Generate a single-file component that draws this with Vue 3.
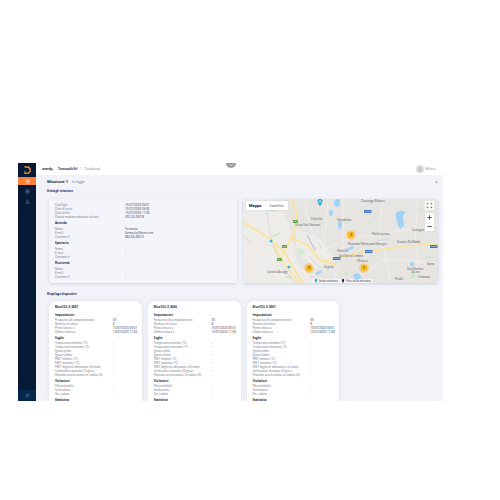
<script setup>
const mission = [
  { rows: [['Cod.Sigla', '15/07/2020 09:01'], ['Data di avvio', '15/07/2020 09:06'], ['Data di fine', '15/07/2020 11:06'], ['Durata massima missione rilevata', '007-22-00018']] },
  { title: 'Azienda', rows: [['Nome', 'Farmacia'], ['E-mail', 'farmacia@farm.com'], ['Contatto n°', '882-66-892 H']] },
  { title: 'Speciario', rows: [['Nome', '-'], ['E-mail', '-'], ['Contatto n°', '-']] },
  { title: 'Ricevente', rows: [['Nome', '-'], ['E-mail', '-'], ['Contatto n°', '-']] },
]
const device = [
  { title: 'Impostazioni', rows: [['Frequenza di campionamento', '30'], ['Numero di letture', '8'], ['Prima lettura a', '15/07/2020 09:01'], ['Ultima lettura a', '15/07/2020 11:00']] },
  { title: 'Soglie', rows: ['Temperatura minima [°C]', 'Temperatura massima [°C]', 'Ignora prime', 'Ignora ultime', 'MKT minima [°C]', 'MKT massima [°C]', 'MKT Soglia di attivazione [kJ/mole]', 'Inclinazione massima [Degree]', 'Massima accelerazione in caduta [G]'].map((l) => [l, '-']) },
  { title: 'Violazioni', rows: ['Microviolabile', 'Inclinazione', 'Sin. caduta'].map((l) => [l, '-']) },
  { title: 'Statistica', rows: [] },
]
const devices = ['BlueCOL 0_0001', 'BlueCOL 0_0066', 'BlueCOL 0_0061']
const places = [
  [68, 21, 'Cinisello'], [52, 27, 'Sesto San Giovanni'], [94, 22, 'Vimodrone'],
  [129, 35.5, 'Melzo/panzo'], [105, 45.5, 'Pozzuolo Martesana Novegro'], [154, 43.5, 'Cassina Dell’Adda'],
  [81, 68.5, 'Segrate'], [24, 73.5, 'Corsico/Assago'], [94, 52.5, 'Pioltello'], [96, 57.5, 'San Bovio Lambro'],
  [114, 62.5, 'Melzo/a'], [164, 71, 'San Martino'], [168, 74, 'Olearo'], [152, 80.5, 'Paullo'],
  [175, 78.5, 'Comazzo'], [169, 31.5, 'Castagna'], [184, 65.5, 'Spino'], [118, 2.5, 'Cavenago Brianza'],
]
const towns = [[8, 16], [32, 36], [65, 38], [97, 28], [75, 10], [130, 20], [178, 12], [128, 61], [169, 77], [34, 63], [48, 77], [100, 70], [180, 37], [120, 7]]
const shields = [[50, 21], [39, 46], [34, 59]]
const roads = [[121, 11], [90, 58], [122, 51], [187, 46]]
const clusters = [[66, 69, 8], [108, 36, 3], [121, 69, 5]]
</script>

<template>
  <div class="page">
    <div class="app">
      <nav class="side" aria-label="Menu">
        <svg class="logo" viewBox="0 0 18 14"><path d="M7 4H9.2A2.8 3 0 0 1 9.2 10.4H7V8.2" fill="none" stroke="#f58a1f" stroke-width="1.3" /><path d="M6.4 4h1.4" stroke="#f58a1f" /></svg>
        <a class="item on" href="#missioni" aria-label="Missioni"><svg viewBox="0 0 6 6"><path d="M1 1.5h4v3.5H1zM2 .7v1.3M4 .7v1.3M1 3h4" /></svg></a>
        <a class="item" href="#dispositivi" aria-label="Dispositivi"><svg viewBox="0 0 6 6"><path d="M1 1h4v4H1zM1 3h4M3 1v4" /></svg></a>
        <a class="item" href="#utenti" aria-label="Utenti"><svg viewBox="0 0 6 6"><circle cx="3" cy="2" r="1" /><path d="M1 5.3c0-2.6 4-2.6 4 0z" /></svg></a>
        <a class="item last" href="#espandi" aria-label="Espandi"><svg viewBox="0 0 6 6"><circle cx="3" cy="3" r="2" /><path d="M2 3h2M3 2v2" /></svg></a>
      </nav>
      <div class="body">
        <header class="top">
          <b class="brand">overdy<i>+</i></b>
          <b>Tecnosoft Srl</b><span class="sep">/</span><span>Dashboard</span>
          <span class="notch"><svg viewBox="0 0 10 5"><path d="M0 0h10A5 5 0 0 1 0 0z" fill="#9b9b9b" /><path d="M3.5 1.3 5 2.8 6.5 1.3" fill="none" stroke="#e8e8e8" stroke-width=".8" /></svg></span>
          <span class="user"><span class="avatar"><svg viewBox="0 0 8 8"><circle cx="4" cy="3.2" r="1.2" /><path d="M2 6.2c0-2.4 4-2.4 4 0z" /></svg></span>Michele</span>
        </header>
        <main class="main">
          <div class="heading"><h1>Missione 1</h1><span>In viaggio</span><button type="button" aria-label="Chiudi">×</button></div>
          <h2>Dettagli missione</h2>
          <section class="overview">
            <div class="card mission">
              <template v-for="(g, i) in mission" :key="i">
                <h4 v-if="g.title">{{ g.title }}</h4>
                <dl><div v-for="r in g.rows" :key="r[0]"><dt>{{ r[0] }}</dt><dd>{{ r[1] }}</dd></div></dl>
              </template>
            </div>
            <div class="map">
              <svg class="canvas" viewBox="0 0 195 84" preserveAspectRatio="xMidYMid slice">
                <rect width="195" height="84" fill="#e7e5e1" />
                <g fill="#eeece8"><path d="M0 0h32l14 25 8 38 18 21H0z" /><path d="M52 30l24 8 16 22-20 10-18-20z" /></g>
                <g fill="#cdebcb">
                  <ellipse cx="30" cy="11" rx="5" ry="2" /><path d="M28 37l8-4 1 2-7 4zM52 52l5-3 5 4-3 3zM42 77l6-1 1 4-6-1z" />
                  <circle cx="127" cy="24" r="1.5" /><circle cx="103" cy="74" r="2" /><circle cx="170" cy="77" r="3" /><ellipse cx="178" cy="11" rx="1.5" ry="3" /><ellipse cx="104" cy="24" rx="2" ry="1" /><ellipse cx="187" cy="58" rx="4" ry="1" />
                </g>
                <g fill="none" stroke="#f5f5f4" stroke-width=".6">
                  <path d="M20 0l5 25 5 18 12 41M60 0l8 30 18 30M100 0v50l-10 34M140 0l-4 30 12 54M175 0l-3 40 6 44M60 60l45-20 40-6 50-8M0 55l30 5 60 24M110 84l30-24 55 4M85 0l-5 60" />
                </g>
                <g fill="none" stroke="#cfcdd0" stroke-width=".7">
                  <path d="M22 0l4 28 4 18 8 20 14 18M75 43l4 7M65 57l12 11M0 36l7 8M134 42l11-2" />
                </g>
                <path d="M64 36l8 15" stroke="#aeb6cf" stroke-width=".9" />
                <g fill="none" stroke="#fbe39a" stroke-width="1.7">
                  <path d="M48 0l4 8 2 12-4 18-8 12-5 12M0 23l26 16 16 15 10 18 8 12M31 46l7 14 18 24M46 38l18 8 14 16 15 4" />
                  <path d="M50 38l5 4M78 62l12-2 27-6 45-7 33-2" />
                </g>
                <g fill="#9fd2f8">
                  <path d="M154 13q4-3 8 0l-2 5 1 8q-3 6-6 1l-1-6q-3-5 0-8z" /><ellipse cx="94" cy="4" rx="3" ry="4" /><ellipse cx="88" cy="14" rx="2" ry="3" /><ellipse cx="97" cy="26" rx="2" ry="4" /><path d="M72 74l6-3 1 2-5 3zM110 76l5-2 4 5-7 2z" /><ellipse cx="169" cy="65" rx="2" ry="2.6" /><path d="M103 50l7-3 1 2-6 3z" />
                </g>
                <g fill="#d9d7d8"><circle v-for="t in towns" :key="t.join()" :cx="t[0]" :cy="t[1]" r=".7" /></g>
                <g class="place"><text v-for="p in places" :key="p[2]" :x="p[0]" :y="p[1]">{{ p[2] }}</text></g>
                <g class="badge"><g v-for="s in shields" :key="s.join()"><rect :x="s[0]" :y="s[1]" width="5" height="3" rx=".6" fill="#5fa84b" /><text :x="s[0] + 2.5" :y="s[1] + 2.3">A51</text></g>
                  <g v-for="s in roads" :key="s.join()"><rect :x="s[0]" :y="s[1]" width="7.5" height="3" rx=".6" fill="#3f74c4" /><text :x="s[0] + 3.7" :y="s[1] + 2.3">SP103</text></g></g>
                <g fill="#43b8e0"><circle cx="28" cy="42" r="1.5" /><circle cx="46" cy="68" r="1.5" /><path d="M77 6.5q-4-6 0-6.5 4 .5 0 6.5z" stroke="#18a9d6" stroke-width="1" /><circle cx="77" cy="2.3" r=".8" fill="#fff" /></g>
                <g v-for="c in clusters" :key="c.join()">
                  <circle :cx="c[0]" :cy="c[1]" r="4.3" stroke="#f9bd2c" stroke-opacity=".6" stroke-width="1.4" stroke-dasharray="1.5 .7" fill="none" />
                  <circle :cx="c[0]" :cy="c[1]" r="3.4" fill="#f9b81f" /><text class="count" :x="c[0]" :y="c[1] + 1">{{ c[2] }}</text>
                </g>
              </svg>
              <div class="types"><button type="button" class="sel">Mappa</button><button type="button">Satellite</button></div>
              <div class="tools">
                <button type="button" aria-label="Schermo intero"><svg viewBox="0 0 8 8"><path d="M2 3.2V2h1.2M4.8 2H6v1.2M6 4.8V6H4.8M3.2 6H2V4.8" stroke-width=".7" /></svg></button>
                <div class="zoom"><button type="button" aria-label="Zoom avanti"><svg viewBox="0 0 8 8"><path d="M2 4h4M4 2v4" /></svg></button><button type="button" aria-label="Zoom indietro"><svg viewBox="0 0 8 8"><path d="M2 4h4" /></svg></button></div>
              </div>
              <div class="legend"><svg viewBox="0 0 4 4"><path d="M2 4Q-.5 0 2 0T2 4z" fill="#18a9d6" /></svg>Inizio missione<svg class="end" viewBox="0 0 4 4"><path d="M2 4Q-.5 0 2 0T2 4z" fill="#222" /></svg>Fine della missione</div>
            </div>
          </section>
          <h2 class="second">Riepilogo dispositivi</h2>
          <section class="devices">
            <article v-for="d in devices" :key="d" class="card device">
              <h3>{{ d }}</h3>
              <template v-for="g in device" :key="g.title">
                <h4>{{ g.title }}</h4>
                <dl v-if="g.rows.length"><div v-for="r in g.rows" :key="r[0]"><dt>{{ r[0] }}</dt><dd>{{ r[1] }}</dd></div></dl>
              </template>
            </article>
          </section>
        </main>
      </div>
    </div>
  </div>
</template>

<style>
body { background: #fff; }
</style>
<style scoped>
* { box-sizing: border-box; margin: 0; padding: 0; }
.page { padding: 163px 57px 0 18px; font: 3px/4px Lato, "Noto Sans", sans-serif; color: #3f4254; }
.app { display: flex; aspect-ratio: 425 / 238; overflow: hidden; }
button { border: 0; background: none; font: inherit; color: inherit; display: block; }
svg { display: block; }
.side { width: 18px; flex: none; background: #071a35; display: flex; flex-direction: column; }
.logo { width: 18px; height: 14px; }
.item { height: 8px; display: flex; align-items: center; justify-content: center; margin-bottom: 2px; }
.item svg { width: 5px; height: 5px; fill: none; stroke: #5c6c8c; stroke-width: .7; }
.item.on { background: #f98237; }
.item.on svg { stroke: #ffd9bd; }
.item.last { height: 11px; margin: auto 0 0; background: #05264b; }
.body { flex: 1; min-width: 0; display: flex; flex-direction: column; background: #f1f3f9; }
.top, h1, h2, h3, h4, dd { font-family: "Open Sans", "Noto Sans", sans-serif; }
.top { height: 12px; flex: none; background: #fff; display: flex; align-items: center; padding: 0 7px 0 6px; position: relative; color: #777a88; }
.top b { color: #22232e; }
.top .brand { margin-right: 4px; color: #111; }
.brand i { color: #f58a1f; }
.sep { margin: 0 3px; }
.notch { position: absolute; left: 190px; top: 0; }
.notch svg { width: 10px; height: 5px; }
.user { margin-left: auto; display: flex; align-items: center; gap: 1px; }
.avatar { width: 8px; height: 8px; border-radius: 50%; background: #dcdde0; }
.avatar svg { fill: #b9bbc0; }
.main { padding: 4px 5px 0 13px; }
.heading { display: flex; align-items: center; gap: 4px; height: 5px; margin-left: -2px; color: #777a8c; }
h1 { font-size: 4px; line-height: 5px; color: #2b2c3d; }
.heading button { margin-left: auto; font-size: 5px; color: #6b6d7c; }
h2 { font-size: 3px; line-height: 4px; margin: 5px 0 6px -2px; color: #2a2b52; }
h2.second { margin: 9px 0 5px -2px; }
.overview { display: grid; grid-template-columns: 188fr 195fr; gap: 6px; }
.card { padding: 4px 6px; border-radius: 5px; }
.mission { background: #f4f5fb; box-shadow: 0 1px 3px #cdd0dc; border-radius: 3px; }
.mission h4 { margin: 2px 0; }
dl > div { display: grid; grid-template-columns: 70fr 106fr; height: 4px; white-space: nowrap; }
dt { color: #7d808e; }
dd { color: #2d2e4b; }
h3, h4 { font-size: 3px; line-height: 4px; color: #2a2b35; }
.devices { display: grid; grid-template-columns: repeat(4, 1fr); gap: 6px; }
.device { background: #fff; box-shadow: 0 0 4px #dcdfe8; border-radius: 7px; }
.device dl > div { grid-template-columns: minmax(0, 58fr) minmax(0, 23fr); }
.device h3 { margin-bottom: 4px; }
.device h4 { margin: 2px 0 1px; }
.map { position: relative; overflow: hidden; border-radius: 2px; box-shadow: 0 1px 3px #cdd0dc; }
.canvas { position: absolute; width: 100%; height: 100%; }
.place text { font-size: 3px; fill: #66676c; }
.badge text { font-size: 2px; fill: #fff; text-anchor: middle; }
.count { font-size: 3px; fill: #7a4b00; text-anchor: middle; font-weight: bold; }
.types { position: absolute; left: 3px; top: 2px; display: flex; background: #fff; color: #6c6c6c; font: 4px/9px Roboto, sans-serif; box-shadow: 0 0 1px #bbb; }
.types button { padding: 0 4px; }
.types .sel { font-weight: bold; color: #111; padding: 0 4px 0 3px; }
.tools { position: absolute; right: 4px; top: 2px; display: grid; gap: 3px; }
.tools button { width: 9px; height: 9px; background: #fff; }
.tools svg { width: 9px; height: 9px; fill: none; stroke: #555; stroke-width: .9; }
.zoom { box-shadow: 0 0 1px #bbb; }
.legend { position: absolute; left: 69px; bottom: 0; background: #f5f5f5; display: flex; align-items: center; padding: 0 2px; gap: 1px; white-space: nowrap; }
.legend svg { width: 4px; height: 4px; }
.legend .end { margin-left: 2px; }
</style>
